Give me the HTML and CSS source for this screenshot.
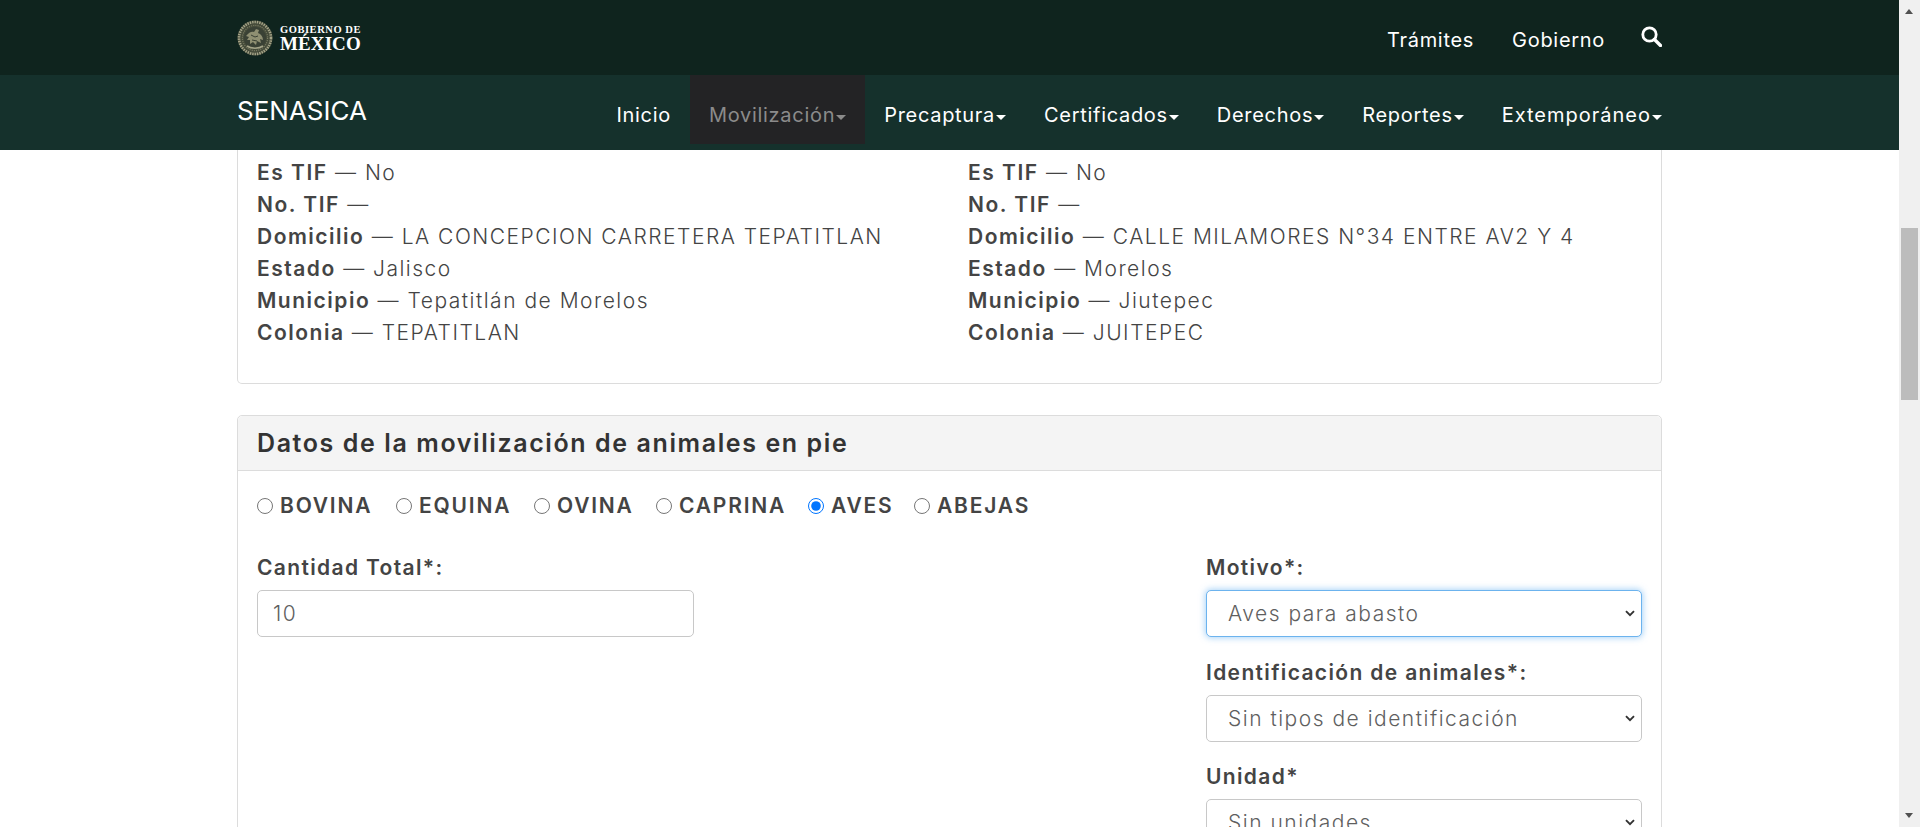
FILE: index.html
```html
<!DOCTYPE html>
<html lang="es">
<head>
<meta charset="utf-8">
<title>SENASICA</title>
<link rel="stylesheet" href="styles.css">
</head>
<body>
<div class="page">
  <div class="viewport">
    <header class="topbar">
      <div class="wrap topbar-row">
        <a class="logo">
          <svg class="emblem" viewBox="0 0 36 36" width="36" height="36" aria-hidden="true">
            <circle cx="18" cy="18" r="17.5" fill="#454b3a"/>
            <circle cx="18" cy="18" r="16" fill="none" stroke="#a5a488" stroke-width="2.6" stroke-dasharray="1.4 1"/>
            <circle cx="18" cy="18" r="12.6" fill="none" stroke="#7b7d64" stroke-width="1.2" stroke-dasharray="1 1.2"/>
            <circle cx="18" cy="18" r="11" fill="#3a4135"/>
            <path d="M9 16c3-4 6-5 8-4l2-3 3 1-1 3c3 1 5 4 5 7l-3-1 1 4-4-2-1 4-3-3-3 2v-4l-3 0 2-3z" fill="#8f8f72"/>
            <path d="M10 26c4 3 12 3 16 0" fill="none" stroke="#a5a488" stroke-width="1.6"/>
            <path d="M14 15l4 2 3-1M15 20l5 1" fill="none" stroke="#3a4135" stroke-width="1"/>
          </svg>
          <span class="logo-text"><span class="logo-small">GOBIERNO DE</span><span class="logo-big">MÉXICO</span></span>
        </a>
        <nav class="toplinks">
          <a class="toplink">Trámites</a>
          <a class="toplink">Gobierno</a>
          <svg class="search" viewBox="0 0 21 21" width="21" height="21" aria-hidden="true">
            <circle cx="8.5" cy="8.5" r="6.7" fill="none" stroke="#fff" stroke-width="2.8"/>
            <path d="M13.5 13.5l6 6" stroke="#fff" stroke-width="3.4" stroke-linecap="round"/>
          </svg>
        </nav>
      </div>
    </header>
    <div class="navbar">
      <div class="wrap navbar-row">
        <a class="brand">SENASICA</a>
        <nav class="menu">
          <a class="item">Inicio</a>
          <a class="item active">Movilización<span class="caret"></span></a>
          <a class="item">Precaptura<span class="caret"></span></a>
          <a class="item">Certificados<span class="caret"></span></a>
          <a class="item">Derechos<span class="caret"></span></a>
          <a class="item">Reportes<span class="caret"></span></a>
          <a class="item item-wide">Extemporáneo<span class="caret"></span></a>
        </nav>
      </div>
    </div>
    <main class="wrap content">
      <section class="card clipped">
        <div class="info-grid">
          <dl class="info">
            <div class="line"><b>Es TIF</b> — No</div>
            <div class="line"><b>No. TIF</b> —</div>
            <div class="line"><b>Domicilio</b> — LA CONCEPCION CARRETERA TEPATITLAN</div>
            <div class="line"><b>Estado</b> — Jalisco</div>
            <div class="line"><b>Municipio</b> — Tepatitlán de Morelos</div>
            <div class="line"><b>Colonia</b> — TEPATITLAN</div>
          </dl>
          <dl class="info">
            <div class="line"><b>Es TIF</b> — No</div>
            <div class="line"><b>No. TIF</b> —</div>
            <div class="line"><b>Domicilio</b> — CALLE MILAMORES N°34 ENTRE AV2 Y 4</div>
            <div class="line"><b>Estado</b> — Morelos</div>
            <div class="line"><b>Municipio</b> — Jiutepec</div>
            <div class="line"><b>Colonia</b> — JUITEPEC</div>
          </dl>
        </div>
      </section>
      <section class="card">
        <h2 class="card-header">Datos de la movilización de animales en pie</h2>
        <div class="card-body">
          <div class="radios">
            <label class="radio r1"><input type="radio" name="especie"><span>BOVINA</span></label>
            <label class="radio r2"><input type="radio" name="especie"><span>EQUINA</span></label>
            <label class="radio r3"><input type="radio" name="especie"><span>OVINA</span></label>
            <label class="radio r4"><input type="radio" name="especie"><span>CAPRINA</span></label>
            <label class="radio r5"><input type="radio" name="especie" checked><span>AVES</span></label>
            <label class="radio r6"><input type="radio" name="especie"><span>ABEJAS</span></label>
          </div>
          <div class="form-grid">
            <div class="field">
              <label class="label">Cantidad Total*:</label>
              <input class="control" type="text" value="10">
            </div>
            <div class="field-stack">
              <div class="field">
                <label class="label">Motivo*:</label>
                <select class="control focus"><option>Aves para abasto</option></select>
              </div>
              <div class="field">
                <label class="label">Identificación de animales*:</label>
                <select class="control"><option>Sin tipos de identificación</option></select>
              </div>
              <div class="field">
                <label class="label">Unidad*</label>
                <select class="control"><option>Sin unidades</option></select>
              </div>
            </div>
          </div>
        </div>
      </section>
    </main>
  </div>
  <div class="scrollbar" aria-hidden="true">
    <span class="arrow up"></span>
    <span class="thumb"></span>
    <span class="arrow down"></span>
  </div>
</div>
</body>
</html>
```

FILE: styles.css
```css
* { box-sizing: border-box; }
html, body { margin: 0; height: 100%; overflow: hidden; }
body { font-family: Inter, "Noto Sans", "Liberation Sans", sans-serif; color: #444; background: #fff; }

.page { display: flex; height: 827px; }
.viewport { flex: 1; min-width: 0; height: 827px; overflow: hidden; }
.wrap { width: 1425px; margin-left: 237px; }

/* top bars */
.topbar { height: 75px; background: #0f241e; }
.topbar-row { height: 75px; display: flex; align-items: center; justify-content: space-between; }
.logo { display: flex; align-items: center; gap: 7px; }
.emblem { display: block; }
.logo-text { display: flex; flex-direction: column; font-family: "Liberation Serif", serif; font-weight: 700; color: #fff; margin-top: 2px; }
.logo-small { font-size: 10.5px; line-height: 11px; letter-spacing: .55px; white-space: nowrap; }
.logo-big { font-size: 19px; line-height: 18px; letter-spacing: .1px; white-space: nowrap; }
.toplinks { display: flex; align-items: center; gap: 38px; }
.toplink { font-size: 20px; letter-spacing: .7px; color: #fff; line-height: 30px; margin-top: 4px; }
.toplink + .search { margin-left: -2px; }
.search { display: block; margin-top: -2px; }

.navbar { height: 75px; background: #15312c; }
.navbar-row { height: 75px; display: flex; justify-content: space-between; align-items: flex-start; }
.brand { font-size: 26px; line-height: 72px; color: #fff; font-weight: 400; }
.menu { display: flex; margin-right: -19px; height: 69px; }
.item { display: block; padding: 5px 19px 0; line-height: 70px; font-size: 20px; letter-spacing: .7px; color: #fff; white-space: nowrap; }
.item-wide { letter-spacing: 1px; }
.item.active { background: #232325; color: #8b8b8b; }
.caret { display: inline-block; width: 0; height: 0; margin-left: 1px; vertical-align: 2px; border-left: 5px solid transparent; border-right: 5px solid transparent; border-top: 5px solid currentColor; }

/* cards */
.content { font-size: 20px; }
.card { border: 1px solid #dcdcdc; border-radius: 5px; background: #fff; }
.card.clipped { border-top: 0; border-top-left-radius: 0; border-top-right-radius: 0; height: 234px; padding: 7px 19px 0; }
.card + .card { margin-top: 31px; }
.info-grid { display: grid; grid-template-columns: 711px 1fr; }
.info { margin: 0; }
.line { font-size: 21px; line-height: 32px; font-weight: 300; letter-spacing: 1.5px; color: #444; white-space: nowrap; }
.line b { font-weight: 600; letter-spacing: 1.5px; }
.card-header { margin: 0; height: 55px; padding: 0 19px; background: #f4f4f4; border-bottom: 1px solid #dcdcdc; border-radius: 5px 5px 0 0; font-size: 25px; letter-spacing: 1.6px; line-height: 55px; font-weight: 600; color: #333; white-space: nowrap; }
.card-body { padding: 0 19px; }

.radios { display: flex; height: 69px; align-items: center; }
.radio { display: flex; align-items: center; font-size: 21px; letter-spacing: 1.8px; font-weight: 600; color: #444; white-space: nowrap; }
.radio input { width: 16px; height: 16px; margin: 0 7px 0 0; flex: none; }
.r1 { width: 139px; } .r2 { width: 138px; } .r3 { width: 122px; } .r4 { width: 152px; } .r5 { width: 106px; }

.form-grid { display: grid; grid-template-columns: 437px 436px; justify-content: space-between; padding-top: 13px; }
.field-stack { display: flex; flex-direction: column; gap: 20.5px; }
.field { display: flex; flex-direction: column; }
.label { font-size: 21px; letter-spacing: 1.35px; font-weight: 600; line-height: 30px; height: 30px; margin-bottom: 7px; color: #444; white-space: nowrap; }
.control { width: 100%; height: 47px; padding: 0 15px; border: 1px solid #c8c8c8; border-radius: 5px; background: #fff; color: #5f5f5f; font: 300 21px Inter, "Noto Sans", sans-serif; letter-spacing: 1.5px; outline: 0; }
select.control { padding-left: 21px; appearance: none; background: #fff url("data:image/svg+xml,%3Csvg xmlns='http://www.w3.org/2000/svg' width='10' height='7' viewBox='0 0 10 7'%3E%3Cpath d='M1 1.2l4 4 4-4' fill='none' stroke='%23333' stroke-width='1.9'/%3E%3C/svg%3E") no-repeat right 6px center; }
.control.focus { border-color: #6cb3ee; box-shadow: 0 0 6px 1px rgba(100, 175, 240, .55); }

/* scrollbar */
.scrollbar { position: relative; width: 21px; flex: none; height: 827px; background: #f0f0f0; }
.thumb { position: absolute; top: 228px; left: 2px; width: 17px; height: 172px; background: #bcbcbc; }
.arrow { position: absolute; left: 6px; width: 0; height: 0; border-left: 4.5px solid transparent; border-right: 4.5px solid transparent; }
.arrow.up { top: 9px; border-bottom: 5px solid #505050; }
.arrow.down { bottom: 9px; border-top: 5px solid #505050; }
```
